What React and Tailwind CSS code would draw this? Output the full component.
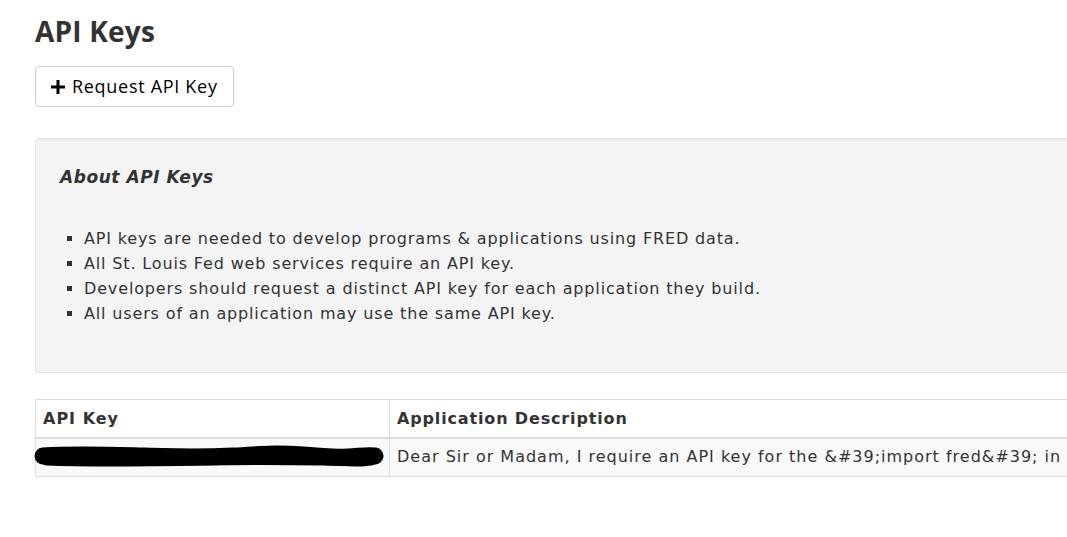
import React from "react";

const bullets = [
  "API keys are needed to develop programs & applications using FRED data.",
  "All St. Louis Fed web services require an API key.",
  "Developers should request a distinct API key for each application they build.",
  "All users of an application may use the same API key.",
];

function Redaction() {
  return (
    <svg width="352" height="28" viewBox="0 0 352 28" className="block">
      <path
        d="M10 13 C 40 11, 70 12, 110 13 S 160 15, 200 13 S 240 10, 270 12 S 300 15, 315 14 S 335 12, 342 13"
        stroke="#000"
        strokeWidth="17"
        strokeLinecap="round"
        fill="none"
      />
      <path
        d="M14 16 C 60 18, 120 17, 170 16 S 240 15, 290 16 S 320 18, 338 16"
        stroke="#000"
        strokeWidth="13"
        strokeLinecap="round"
        fill="none"
      />
    </svg>
  );
}

export default function App() {
  return (
    <div className="w-[1067px] h-[537px] overflow-hidden bg-white text-[#333] font-['DejaVu_Sans',Verdana,sans-serif]">
      <div className="w-[1240px] pl-[35px]">
        <h1 className="pt-[13px] text-[28px] leading-[36px] font-bold text-[#333] font-['Open_Sans',Arial,sans-serif] tracking-[0.2px]">
          API Keys
        </h1>

        <button className="mt-[17px] h-[41px] px-[15px] flex items-center gap-[7px] border border-[#ccc] rounded-[4px] bg-white text-black text-[18px] tracking-[0.7px] font-['Open_Sans',Arial,sans-serif]">
          <svg width="14" height="14" viewBox="0 0 14 14">
            <path d="M7 0v14M0 7h14" stroke="#000" strokeWidth="3" />
          </svg>
          Request API Key
        </button>

        <div className="mt-[31px] h-[235px] bg-[#f4f4f4] border border-[#e3e3e3] rounded-[4px] shadow-[inset_0_1px_1px_rgba(0,0,0,0.05)] pt-[25px] px-[24px]">
          <h4 className="text-[17px] leading-[26px] font-bold italic text-[#333] tracking-[0.55px]">
            About API Keys
          </h4>
          <ul className="mt-[36px] pl-[24px] list-[square] text-[16px] leading-[25px] tracking-[0.85px] marker:text-[#333]">
            {bullets.map((b) => (
              <li key={b}>{b}</li>
            ))}
          </ul>
        </div>

        <table className="mt-[26px] w-full border-collapse text-[16px] text-[#333]">
          <thead>
            <tr className="h-[38px]">
              <th className="w-[354px] text-left font-bold tracking-[1px] px-[7px] pt-[2px] border border-[#ddd] border-b-2">
                API Key
              </th>
              <th className="text-left font-bold tracking-[0.85px] px-[7px] pt-[2px] border border-[#ddd] border-b-2">
                Application Description
              </th>
            </tr>
          </thead>
          <tbody>
            <tr className="h-[39px] bg-[#f9f9f9]">
              <td className="border border-[#ddd] p-0 align-middle">
                <div className="-ml-[3px]">
                  <Redaction />
                </div>
              </td>
              <td className="border border-[#ddd] px-[7px] whitespace-nowrap tracking-[1px]">
                Dear Sir or Madam, I require an API key for the &amp;#39;import fred&amp;#39; in
              </td>
            </tr>
          </tbody>
        </table>
      </div>
    </div>
  );
}
